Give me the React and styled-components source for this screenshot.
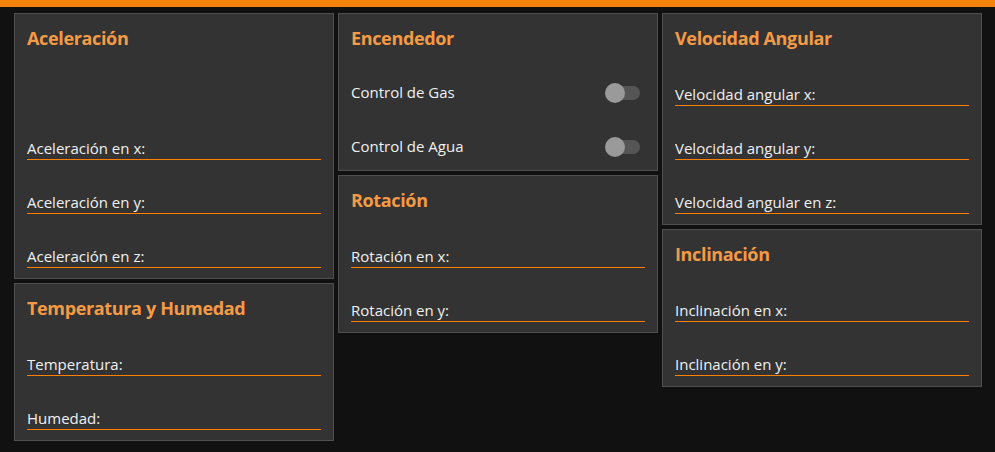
import React from "react";
import styled, { createGlobalStyle } from "styled-components";

const Global = createGlobalStyle`
  html, body { margin: 0; padding: 0; background: #111111; }
  body { font-family: "Open Sans", "Noto Sans", sans-serif; }
  * { box-sizing: border-box; }
`;

const TopBar = styled.div`
  height: 7px;
  background: #f5820a;
`;

const Grid = styled.main`
  display: grid;
  grid-template-columns: repeat(3, 320px);
  column-gap: 4px;
  padding: 6px 13px 12px 14px;
  align-items: start;
`;

const Column = styled.div`
  display: flex;
  flex-direction: column;
  gap: 4px;
`;

const Card = styled.section`
  background: #333333;
  border: 1px solid #4f4f4f;
  padding: 12px 12px 10px 12px;
  display: flex;
  flex-direction: column;
`;

const Title = styled.h3`
  margin: 0;
  height: 26px;
  font-size: 18px;
  line-height: 25px;
  font-weight: 700;
  color: #f59a45;
  letter-spacing: -0.35px;
`;

const Spacer = styled.div`
  height: 54px;
`;

const Field = styled.div`
  height: 54px;
  display: flex;
  align-items: flex-end;
  border-bottom: 1px solid #ff8000;
`;

const Label = styled.span`
  font-size: 15px;
  line-height: 20px;
  color: #f0f0f0;
  letter-spacing: 0px;
  padding-bottom: 1px;
`;

const ToggleRow = styled.div`
  height: 54px;
  padding-top: 27px;
  display: flex;
  align-items: center;
  justify-content: space-between;
`;

const Switch = styled.div`
  position: relative;
  width: 36px;
  height: 20px;
  margin-right: 5px;
`;

const Track = styled.span`
  position: absolute;
  left: 8px;
  right: 0;
  top: 3px;
  height: 14px;
  border-radius: 7px;
  background: #555555;
`;

const Thumb = styled.span`
  position: absolute;
  left: 1px;
  top: 0;
  width: 20px;
  height: 20px;
  border-radius: 50%;
  background: #9a9a9a;
`;

const Toggle = ({ label }) => (
  <ToggleRow>
    <Label>{label}</Label>
    <Switch>
      <Track />
      <Thumb />
    </Switch>
  </ToggleRow>
);

const FieldCard = ({ title, fields, spacer }) => (
  <Card>
    <Title>{title}</Title>
    {spacer && <Spacer />}
    {fields.map((f) => (
      <Field key={f}>
        <Label>{f}</Label>
      </Field>
    ))}
  </Card>
);

export default function App() {
  return (
    <>
      <Global />
      <TopBar />
      <Grid>
        <Column>
          <FieldCard
            title="Aceleración"
            spacer
            fields={["Aceleración en x:", "Aceleración en y:", "Aceleración en z:"]}
          />
          <FieldCard
            title="Temperatura y Humedad"
            fields={["Temperatura:", "Humedad:"]}
          />
        </Column>
        <Column>
          <Card>
            <Title>Encendedor</Title>
            <Toggle label="Control de Gas" />
            <Toggle label="Control de Agua" />
          </Card>
          <FieldCard title="Rotación" fields={["Rotación en x:", "Rotación en y:"]} />
        </Column>
        <Column>
          <FieldCard
            title="Velocidad Angular"
            fields={["Velocidad angular x:", "Velocidad angular y:", "Velocidad angular en z:"]}
          />
          <FieldCard title="Inclinación" fields={["Inclinación en x:", "Inclinación en y:"]} />
        </Column>
      </Grid>
    </>
  );
}
